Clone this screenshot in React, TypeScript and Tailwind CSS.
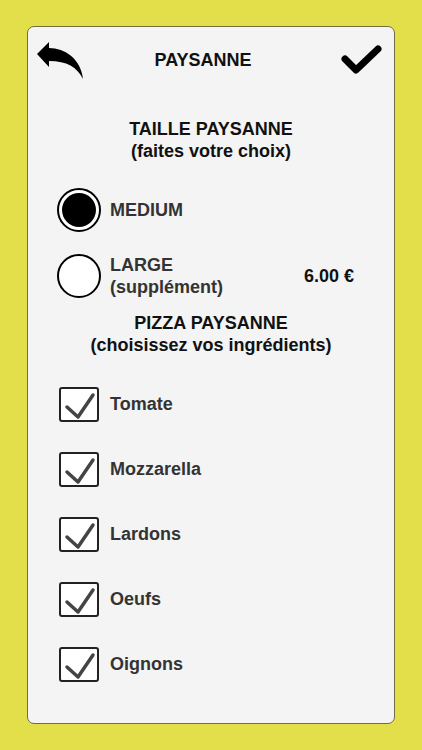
import React, { useState } from 'react';

const font = { fontFamily: '"Liberation Sans", Arial, sans-serif' };

const BackIcon = () => (
  <svg width="47" height="39" viewBox="0 0 47 39" className="block">
    <path d="M0 13 L12 1 L12 7 C28 7 44 18 46 38 C40 26 30 20 12 20 L12 26 Z" fill="#000" />
  </svg>
);

const DoneIcon = () => (
  <svg width="44" height="34" viewBox="0 0 44 34" className="block">
    <path
      d="M5 16 L16 27 L38 6"
      fill="none"
      stroke="#000"
      strokeWidth="7"
      strokeLinecap="round"
      strokeLinejoin="round"
    />
  </svg>
);

const Radio = ({ checked }: { checked: boolean }) => (
  <div className="w-[44px] h-[44px] shrink-0 rounded-full border-2 border-black bg-white flex items-center justify-center">
    {checked && <div className="w-[34px] h-[34px] rounded-full bg-black" />}
  </div>
);

const CheckBox = () => (
  <div className="w-[40px] h-[35px] shrink-0 rounded-[3px] border-2 border-[#222] bg-white">
    <svg width="36" height="31" viewBox="0 0 36 31" className="block">
      <path
        d="M6 18 L17 28 L32 6"
        fill="none"
        stroke="#444"
        strokeWidth="3.5"
        strokeLinecap="round"
        strokeLinejoin="round"
      />
    </svg>
  </div>
);

const ingredients = ['Tomate', 'Mozzarella', 'Lardons', 'Oeufs', 'Oignons'];

export default function App() {
  const [size, setSize] = useState<'medium' | 'large'>('medium');

  return (
    <div className="w-full h-[750px] bg-[#e3df4b] pt-[26px] pb-[26px] px-[27px] flex" style={font}>
      <div className="flex-1 flex flex-col bg-[#f4f4f4] border border-[#6f6d45] rounded-[7px]">
        <div className="h-[66px] flex items-center pl-[9px] pr-[10px]">
          <BackIcon />
          <h1 className="flex-1 text-center text-[18px] font-bold text-[#111] pr-[18px]">PAYSANNE</h1>
          <DoneIcon />
        </div>

        <div className="mt-[25px] text-center text-[18px] leading-[22px] font-bold text-[#111]">
          <p>TAILLE PAYSANNE</p>
          <p>(faites votre choix)</p>
        </div>

        <div className="mt-[26px] ml-[29px] flex items-center gap-[9px]" onClick={() => setSize('medium')}>
          <Radio checked={size === 'medium'} />
          <span className="text-[18px] font-bold text-[#333]">MEDIUM</span>
        </div>

        <div className="mt-[22px] ml-[29px] pr-[40px] flex items-center gap-[9px]" onClick={() => setSize('large')}>
          <Radio checked={size === 'large'} />
          <div className="flex-1 text-[18px] leading-[22px] font-bold text-[#333]">
            <p>LARGE</p>
            <p>(supplément)</p>
          </div>
          <span className="text-[18px] font-bold text-[#111]">6.00 €</span>
        </div>

        <div className="mt-[14px] text-center text-[18px] leading-[22px] font-bold text-[#111]">
          <p>PIZZA PAYSANNE</p>
          <p>(choisissez vos ingrédients)</p>
        </div>

        <div className="mt-[31px] ml-[31px] flex flex-col gap-[30px]">
          {ingredients.map((name) => (
            <div key={name} className="flex items-center gap-[11px]">
              <CheckBox />
              <span className="text-[18px] font-bold text-[#333]">{name}</span>
            </div>
          ))}
        </div>
      </div>
    </div>
  );
}
